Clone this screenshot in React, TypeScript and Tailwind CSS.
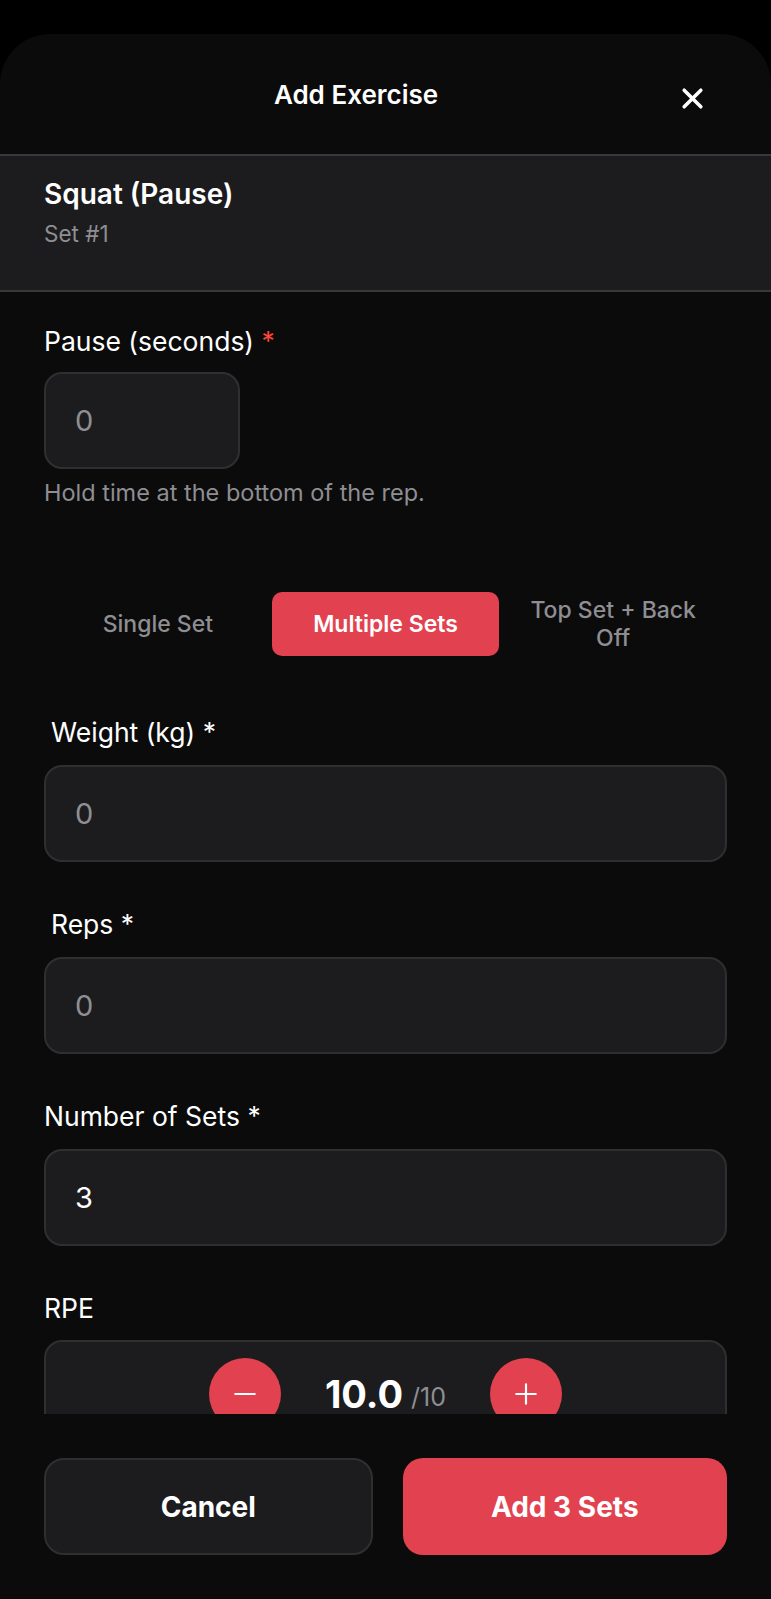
import React from 'react'

const FONT = { fontFamily: 'Inter, "Noto Sans", "Liberation Sans", sans-serif' }

function Field({ label, value, muted = true, indent = false, first = false }: { label: string; value: string; muted?: boolean; indent?: boolean; first?: boolean }) {
  return (
    <div className={first ? 'mt-[60px]' : 'mt-[46px]'}>
      <div className={`text-[26.5px] leading-[32px] text-white ${indent ? 'pl-[7px]' : ''}`}>{label}</div>
      <div className="mt-[17px] h-[97px] w-full rounded-[18px] border-2 border-[#2f2f31] bg-[#1c1c1e] pl-[29px] flex items-center">
        <span className={`text-[29px] ${muted ? 'text-[#8e8e93]' : 'text-white'}`}>{value}</span>
      </div>
    </div>
  )
}

export default function App() {
  return (
    <div className="min-h-screen bg-black pt-[34px]" style={FONT}>
      <div className="h-[1565px] flex flex-col bg-[#0b0b0b] rounded-t-[50px] overflow-hidden">
        {/* Header */}
        <div className="h-[120px] shrink-0 flex items-center pl-[44px] pr-[55px]">
          <h1 className="flex-1 text-center text-[26px] font-semibold text-white">Add Exercise</h1>
          <button className="w-12 h-12 flex items-center justify-center translate-y-1" aria-label="Close">
            <svg viewBox="0 0 24 24" className="w-[25px] h-[25px]" fill="none" stroke="white" strokeWidth="3.4" strokeLinecap="round">
              <path d="M4 4l16 16M20 4L4 20" />
            </svg>
          </button>
        </div>

        {/* Exercise card */}
        <div className="h-[138px] shrink-0 border-y-2 border-[#38383a] bg-[#1c1c1e] px-[44px] pt-[21px]">
          <div className="text-[28px] leading-[34px] font-semibold text-white">Squat (Pause)</div>
          <div className="mt-2 text-[22.5px] leading-[30px] text-[#8e8e93]">Set #1</div>
        </div>

        {/* Scroll area */}
        <div className="flex-1 overflow-hidden px-[44px] pt-[33px]">
          <div className="text-[26.5px] leading-[32px] text-white">
            Pause (seconds) <span className="text-[#ff453a]">*</span>
          </div>
          <div className="mt-[15px] w-[196px] h-[97px] rounded-[18px] border-2 border-[#2f2f31] bg-[#1c1c1e] pl-[29px] flex items-center">
            <span className="text-[29px] text-[#8e8e93]">0</span>
          </div>
          <p className="mt-[10px] text-[23.5px] leading-[28px] text-[#8e8e93]">Hold time at the bottom of the rep.</p>

          <div className="mt-[85px] grid grid-cols-3 h-[64px]">
            <div className="flex items-center justify-center text-[23px] font-medium text-[#8e8e93]">Single Set</div>
            <div className="flex items-center justify-center rounded-[10px] bg-[#e2424f] text-[23px] font-semibold text-white">Multiple Sets</div>
            <div className="flex items-center justify-center text-center text-[23px] leading-[28px] font-medium text-[#8e8e93] px-[28px]">Top Set + Back Off</div>
          </div>

          <Field label="Weight (kg) *" value="0" indent first />
          <Field label="Reps *" value="0" indent />
          <Field label="Number of Sets *" value="3" muted={false} />

          <div className="mt-[46px]">
            <div className="text-[26.5px] leading-[32px] text-white">RPE</div>
            <div className="mt-[16px] h-[130px] w-full rounded-[18px] border-2 border-[#2f2f31] bg-[#1c1c1e] pt-[16px] flex items-start justify-center gap-[44px]">
              <button className="w-[72px] h-[72px] rounded-full bg-[#e2424f] flex items-center justify-center" aria-label="Decrease">
                <svg viewBox="0 0 24 24" className="w-[26px] h-[26px]" fill="none" stroke="white" strokeWidth="2" strokeLinecap="round">
                  <path d="M3 12h18" />
                </svg>
              </button>
              <div className="h-[72px] flex items-center">
                <span className="text-[38px] font-bold text-white">10.0</span>
                <span className="ml-[8px] mt-[8px] text-[25px] text-[#8e8e93]">/10</span>
              </div>
              <button className="w-[72px] h-[72px] rounded-full bg-[#e2424f] flex items-center justify-center" aria-label="Increase">
                <svg viewBox="0 0 24 24" className="w-[26px] h-[26px]" fill="none" stroke="white" strokeWidth="2" strokeLinecap="round">
                  <path d="M3 12h18M12 3v18" />
                </svg>
              </button>
            </div>
          </div>
        </div>

        {/* Footer */}
        <div className="h-[185px] shrink-0 px-[44px] pt-[44px] flex gap-[30px]">
          <button className="flex-1 h-[97px] rounded-[20px] border-2 border-[#2f2f31] bg-[#1c1c1e] text-[28px] font-bold text-white">Cancel</button>
          <button className="flex-1 h-[97px] rounded-[20px] bg-[#e2424f] text-[28px] font-bold text-white">Add 3 Sets</button>
        </div>
      </div>
    </div>
  )
}
